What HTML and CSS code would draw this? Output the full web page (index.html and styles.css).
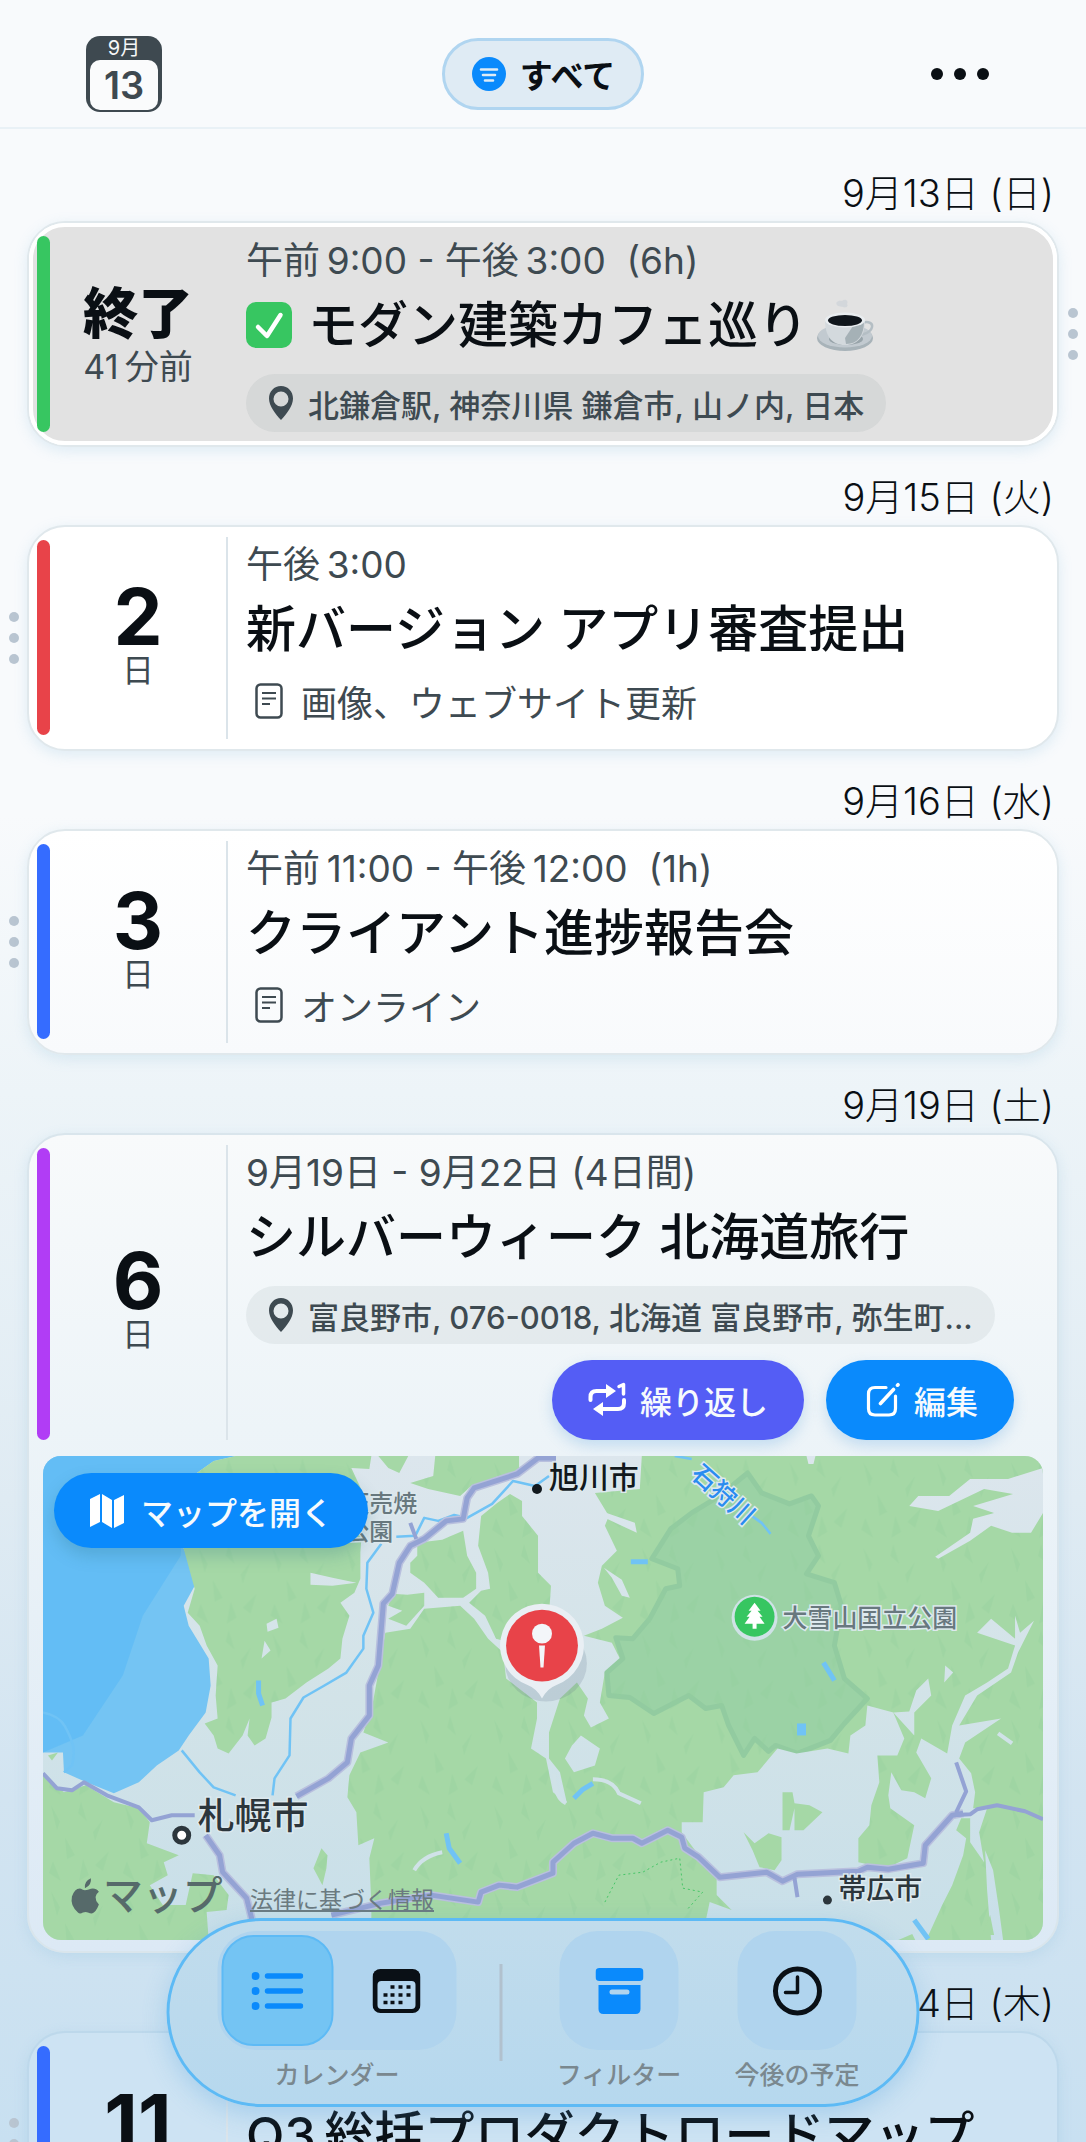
FILE: index.html
```html
<!DOCTYPE html>
<html lang="ja">
<head>
  <meta charset="UTF-8">
  <meta name="viewport" content="width=device-width, initial-scale=1">
  <title>カレンダー</title>
  <link rel="stylesheet" href="styles.css">
</head>
<body>
  <div class="app">
    <header class="topbar">
      <button class="today" type="button">
        <span class="today-month">9月</span>
        <span class="today-day">13</span>
      </button>
      <button class="filter-pill" type="button">
        <svg width="34" height="34" viewBox="0 0 34 34" aria-hidden="true">
          <circle cx="17" cy="17" r="17" fill="#0a8afc"/>
          <path d="M9 12.500h16M11 18h12M13 23.500h8" stroke="#dfecf5" stroke-width="2.600" stroke-linecap="round"/>
        </svg>
        すべて
      </button>
      <button class="more" type="button" aria-label="その他">
        <span></span><span></span><span></span>
      </button>
    </header>

    <main class="agenda">
      <h2 class="date">9月13日 (日)</h2>
      <div class="entry">
        <article class="card done">
          <div class="row">
            <div class="bar green"></div>
            <div class="day">
              <strong class="state">終了</strong>
              <span class="ago">41&thinsp;分前</span>
            </div>
            <div class="info">
              <p class="time">午前&thinsp;9:00 - 午後&thinsp;3:00&nbsp; (6h)</p>
              <h3 class="title">
                <svg class="check" width="46" height="46" viewBox="0 0 46 46" aria-hidden="true">
                  <rect width="46" height="46" rx="10" fill="#37c661"/>
                  <path d="M12 25l9 9L34.500 13" fill="none" stroke="#fff" stroke-width="4.500" stroke-linecap="round" stroke-linejoin="round"/>
                </svg>
                <span>モダン建築カフェ巡り</span>
                <svg width="58" height="54" viewBox="0 0 58 54" aria-hidden="true">
                  <path d="M22 8c-4-3 0-6 4-5 3-3 7 0 5 3 2 3-2 4-4 3" fill="#cfd5d9" opacity=".8"/>
                  <ellipse cx="29" cy="40" rx="28" ry="13" fill="#a8b3b9"/>
                  <ellipse cx="29" cy="38" rx="27" ry="11.500" fill="#c2cad0"/>
                  <ellipse cx="30" cy="41" rx="17" ry="6" fill="#98a4aa"/>
                  <path d="M45 27c4-5 12-3 11 2s-8 8-14 8" fill="none" stroke="#b4bec4" stroke-width="2.500"/>
                  <path d="M9 22c0 15 6 25 20 25s20-10 20-25z" fill="#d3d9dd"/>
                  <path d="M30 46c12 0 18-9 18-23l-11 5-8 12z" fill="#9aa6ac" opacity=".8"/>
                  <ellipse cx="29" cy="22" rx="20" ry="7.500" fill="#e9edf0"/>
                  <ellipse cx="29" cy="22.500" rx="17" ry="5.500" fill="#10161c"/>
                </svg>
              </h3>
              <p class="place">
                <svg width="26" height="36" viewBox="0 0 26 36" aria-hidden="true">
                  <path fill-rule="evenodd" d="M13 1C6 1 1 6.500 1 13.500 1 21 7.500 29 13 35c5.500-6 12-14 12-21.500C25 6.500 20 1 13 1zm0 5.500a7.500 7.500 0 1 1 0 15 7.500 7.500 0 0 1 0-15z" fill="#3e4a51"/>
                </svg>
                <span>北鎌倉駅, 神奈川県 鎌倉市, 山ノ内, 日本</span>
              </p>
            </div>
          </div>
        </article>
        <div class="handle right"><i></i><i></i><i></i></div>
      </div>

      <h2 class="date">9月15日 (火)</h2>
      <div class="entry">
        <div class="handle"><i></i><i></i><i></i></div>
        <article class="card">
          <div class="row">
            <div class="bar red"></div>
            <div class="day">
              <strong class="count">2</strong>
              <span class="unit">日</span>
            </div>
            <div class="rule"></div>
            <div class="info">
              <p class="time">午後&thinsp;3:00</p>
              <h3 class="title">新バージョン アプリ審査提出</h3>
              <p class="memo">
                <svg width="28" height="36" viewBox="0 0 28 36" aria-hidden="true">
                  <rect x="1.500" y="1.500" width="25" height="33" rx="4" fill="none" stroke="#3e4a51" stroke-width="2.500"/>
                  <path d="M7 10h14M7 15.500h14M7 21h8" stroke="#3e4a51" stroke-width="2.200"/>
                </svg>
                <span>画像、ウェブサイト更新</span>
              </p>
            </div>
          </div>
        </article>
      </div>

      <h2 class="date">9月16日 (水)</h2>
      <div class="entry">
        <div class="handle"><i></i><i></i><i></i></div>
        <article class="card fade-1">
          <div class="row">
            <div class="bar blue"></div>
            <div class="day">
              <strong class="count">3</strong>
              <span class="unit">日</span>
            </div>
            <div class="rule"></div>
            <div class="info">
              <p class="time">午前&thinsp;11:00 - 午後&thinsp;12:00&nbsp; (1h)</p>
              <h3 class="title">クライアント進捗報告会</h3>
              <p class="memo">
                <svg width="28" height="36" viewBox="0 0 28 36" aria-hidden="true">
                  <rect x="1.500" y="1.500" width="25" height="33" rx="4" fill="none" stroke="#3e4a51" stroke-width="2.500"/>
                  <path d="M7 10h14M7 15.500h14M7 21h8" stroke="#3e4a51" stroke-width="2.200"/>
                </svg>
                <span>オンライン</span>
              </p>
            </div>
          </div>
        </article>
      </div>

      <h2 class="date">9月19日 (土)</h2>
      <div class="entry">
        <article class="card fade-2">
          <div class="row open">
            <div class="bar purple"></div>
            <div class="day">
              <strong class="count">6</strong>
              <span class="unit">日</span>
            </div>
            <div class="rule"></div>
            <div class="info">
              <p class="time">9月19日 - 9月22日 (4日間)</p>
              <h3 class="title">シルバーウィーク 北海道旅行</h3>
              <p class="place">
                <svg width="26" height="36" viewBox="0 0 26 36" aria-hidden="true">
                  <path fill-rule="evenodd" d="M13 1C6 1 1 6.500 1 13.500 1 21 7.500 29 13 35c5.500-6 12-14 12-21.500C25 6.500 20 1 13 1zm0 5.500a7.500 7.500 0 1 1 0 15 7.500 7.500 0 0 1 0-15z" fill="#3e4a51"/>
                </svg>
                <span>富良野市, 076-0018, 北海道 富良野市, 弥生町...</span>
              </p>
              <div class="actions">
                <button class="action repeat" type="button">
                  <svg width="38" height="36" viewBox="0 0 38 36" aria-hidden="true">
                    <path d="M2.500 18v-3q0-6 6-6H18M36 18v3q0 6-6 6H14" fill="none" stroke="#fff" stroke-width="4" stroke-linecap="round"/>
                    <path d="M18 2l10 7-10 7zM15 20L5 27l10 7z" fill="#fff"/>
                    <path d="M31 4.500L35.500 2.500V12" fill="none" stroke="#fff" stroke-width="3.500" stroke-linecap="round" stroke-linejoin="round"/>
                  </svg>
                  繰り返し
                </button>
                <button class="action edit" type="button">
                  <svg width="34" height="36" viewBox="0 0 34 36" aria-hidden="true">
                    <path d="M20 5.500H9q-6.500 0-6.500 6.500v14.500Q2.500 33 9 33h14q6.500 0 6.500-6.500V14" fill="none" stroke="#fff" stroke-width="3.200" stroke-linecap="round"/>
                    <path d="M27.500 7.500L14.500 21.500M31.500 3.200l.500-.500" stroke="#fff" stroke-width="3.600" stroke-linecap="round"/>
                  </svg>
                  編集
                </button>
              </div>
            </div>
          </div>

          <div class="map">
            <svg class="map-art" viewBox="0 0 1002 485" preserveAspectRatio="xMidYMid slice">
              <defs>
                <pattern id="relief" width="74" height="86" patternUnits="userSpaceOnUse">
                  <path d="M8 6l9 16-3 9zM38 2l6 20-9-8zM60 20l-8 22-2-9zM22 38l10 18-8 4zM66 52l-6 20-8-6zM10 62l8 20-12-8zM40 60l6 16-10 6z" fill="#93cd9c" opacity=".3"/>
                </pattern>
                <linearGradient id="plain" gradientUnits="userSpaceOnUse" x1="0" y1="0" x2="0" y2="485">
                  <stop offset="0" stop-color="#dce6ed"/>
                  <stop offset=".5" stop-color="#d2e3e8"/>
                  <stop offset="1" stop-color="#c8dfe9"/>
                </linearGradient>
                <g id="woods">
                  <path d="M193 0H329L327 13 309 12 322 40 318 97V123L312 137 298 147 307 160 300 183 298 203 286 213 264 227 243 243 229 247V262L223 283 212 290 205 280 207 263 200 280 186 298 175 293 171 280 162 268 175 263 173 240 175 210 164 190 157 170 145 157 152 133 141 93 140 40 154 17 171 5z"/>
                  <path d="M393 0H477V15L457 20 429 30 418 40 386 33 368 27 391 20zM336 0H366L357 17 346 12z"/>
                  <path d="M375 87L400 84 421 75 425 100 434 117V133L421 142H396L382 127 368 117V107L375 100z"/>
                  <path d="M439 60L455 47 468 38 480 45V60L496 80V117L509 130 507 160 480 190 454 183 443 160 427 147 439 135 448 133 446 117 436 90z"/>
                  <path d="M350 138L365 139 382 137V150L364 170 346 163 360 155 346 150z"/>
                  <path d="M343 177L368 173 382 153 418 150 432 163 446 183 461 197 464 223 495 247V263L489 293 504 303 511 337 525 348 518 317 507 303V277L518 243 535 227 546 243 542 260 549 272 567 263 558 247 563 217 579 205 570 187 542 180 560 173 581 162 563 150 556 127 560 110 575 95 563 70 567 60 553 37 598 33 600 0H1002V485H329V450L327 403 332 383 316 390 314 357 305 342 307 320 318 297 346 287 321 277 330 250 336 217z"/>
                  <path d="M0 320L21 337 43 330 71 347 96 353 107 367 104 388 136 400 121 407 125 420 107 430 120 450H143L150 418 171 420 186 440 184 455 164 457 166 485H0zM279 393L285 400 284 413 280 430 271 413z"/>
                </g>
              </defs>

              <rect width="1002" height="485" fill="url(#plain)"/>
              <path d="M0 0H193L171 5 154 17 140 40 141 93 153 117 152 130 141 150 146 170 166 203 168 230 163 257 146 280 136 295 114 310 96 327 71 338 46 328 21 317 20 297H0z" fill="#74c4f3"/>
              <path d="M0 0H193L171 5 154 17 140 60 138 100 100 160 80 220 40 280 0 297z" fill="#5dbbf5" opacity=".7"/>
              <use href="#woods" fill="#a5d8a6"/>
              <path d="M706 17L720 37 748 48 770 40 777 50 767 80 777 100 765 118 793 127 800 150 793 190 803 223 826 243 803 268 789 285 756 298 734 290 727 296 713 283 702 300 687 270 680 250 664 253 647 240 612 258 588 242 567 240 565 217 581 203 574 182 591 183 608 163 624 133 638 130 636 113 610 103 629 73 650 57 678 40z" fill="#9bd2a5" stroke="#92cba0" stroke-width="5" stroke-linejoin="round"/>
              <use href="#woods" fill="url(#relief)"/>

              <!-- plains and valleys -->
              <g fill="url(#plain)">
                <path d="M640 367H661L662 337 682 332 692 320 716 317 736 293 755 298 786 293 807 298 809 280 824 270 826 250 852 257 863 283 856 300H836L838 327 830 350 828 370 817 383V407L845 413 866 403 873 370 849 353 847 340 850 317 860 335 873 337 884 343 890 323 875 297 880 283 906 298 911 270 924 240 946 227 967 213 974 190 936 177 950 163 974 183V160L979 177 993 165 977 197 970 217 936 240 918 270 960 263 924 287 918 303 930 318 934 337 932 353 946 353 938 377 943 407 929 387V363H920L915 375 925 383 922 400 911 430 901 450 885 485H660L668 447 690 455 675 440V420L657 400 640 377z"/>
                <path d="M868 50L877 40 908 40 929 23 967 23 1002 12V57L990 77H971L950 70 929 85 897 103 894 101 929 77 932 63 953 57 932 50 972 38 943 33 897 55z"/>
                <path d="M904 210L912 217 903 227zM887 223L890 240 873 257V280L852 257 868 256 875 235zM523 303L530 290 539 280 558 293 553 310 532 317zM268 117L290 122 314 127 290 130 268 129zM224 168L234 163 236 172 225 176zM222 185L228 195 219 203zM765 0h9l-2 8h-5z"/>
                <path d="M944 395l8 20 6 40 4 30h-12l-4-50zM559 55l34 12 2 10-30-14zM562 112l18 12 8 18-8-2-10-18z"/>
              </g>
              <g fill="#a5d8a6">
                <path d="M741 337H751L753 348 768 350 781 357 762 375H753V353L748 375H741zM702 377L713 388 727 378 740 382V405L733 415 718 412 711 395z"/>
                <path d="M857 485l14-6 3 6zM941 480l8-20 4 20zM5 300l10-3-6 8z"/>
              </g>
              <g fill="none" stroke="#d0e2e8" stroke-width="4">
                <path d="M372 415q8-14 28-18M512 318q0 24 12 30M551 324q20 0 26 14l22 10M957 278l14 10"/>
              </g>
              <path d="M563 447L577 420 601 417 619 407 638 403 641 433 661 437 645 455" fill="none" stroke="#45c566" stroke-dasharray="2 3"/>

              <g fill="none" stroke="#70c3f5" stroke-width="2.500" stroke-linejoin="round">
                <path d="M507 20L493 30 471 25 450 48 425 62 412 59 396 65 382 62 373 80 354 81M339 88L325 107 324 133 331 157 321 180V193L304 217 282 230 261 242 248 263 247 300 232 323 230 340M139 295L157 317 171 332 193 340M0 257Q16 260 22 271T30 290 29 310L21 317M633 0L650 3M706 57L720 67 729 78"/>
                <path d="M216 225V238L220 250M589 106H606" stroke-width="5"/>
                <path d="M404 378L407 393 418 408M782 207L793 225M532 343L541 334 551 328M873 465L887 484" stroke-width="5"/>
                <path d="M760 268V280" stroke-width="9"/>
              </g>

              <g fill="none" stroke-linejoin="round">
                <g stroke="#b9c0de" stroke-width="8">
                  <path d="M514 2H496L475 18 432 32 425 42 421 63 404 65 382 83 368 90 357 107 350 138 341 148 336 210 327 230V260L309 283 305 307 286 323 254 341M163 380L177 400 180 417 204 443 209 463V485"/>
                  <path d="M289 460L339 448 389 440 436 447 439 437 457 430 475 432 511 418V407L532 388 551 378 570 383 591 383 600 388 626 375 640 382 643 393 657 402 678 422 725 417 741 426 756 419 817 416 826 412 847 414 882 408 884 390 911 360 922 358"/>
                </g>
                <g stroke="#94a3d4" stroke-width="5">
                  <path d="M514 2H496L475 18 432 32 425 42 421 63 404 65 382 83 368 90 357 107 350 138 341 148 336 210 327 230V260L309 283 305 307 286 323 254 341M163 380L177 400 180 417 204 443 209 463V485"/>
                  <path d="M289 460L339 448 389 440 436 447 439 437 457 430 475 432 511 418V407L532 388 551 378 570 383 591 383 600 388 626 375 640 382 643 393 657 402 678 422 725 417 741 426 756 419 817 416 826 412 847 414 882 408 884 390 911 360 922 358"/>
                  <path d="M0 318L14 333 29 335 41 327 64 340 96 352 109 365 129 360 152 360M911 360L929 359 936 354 956 350 984 356 1002 364M915 307L925 336 915 357M753 423L756 442M368 67L374 83" stroke-width="4"/>
                </g>
              </g>

              <g class="map-label">
                <text x="303" y="56" font-size="24" fill="#68787e">天売焼</text>
                <text x="303" y="84" font-size="24" fill="#68787e">公園</text>
                <text x="507" y="32" font-size="30" fill="#11181d">旭川市</text>
                <text x="741" y="171" font-size="25" fill="#68787e">大雪山国立公園</text>
                <text x="155" y="374" font-size="37" fill="#2c363c">札幌市</text>
                <text x="797" y="444" font-size="28" fill="#2c363c">帯広市</text>
                <text x="648" y="20" font-size="25" fill="#2a8cf0" transform="rotate(42 648 20)">石狩川</text>
              </g>
              <circle cx="495" cy="33" r="5" fill="#11181d"/>
              <circle cx="786" cy="445" r="4.500" fill="#2c363c"/>
              <circle cx="139" cy="380" r="7" fill="#fff" stroke="#2c363c" stroke-width="5"/>

              <circle cx="713" cy="162" r="23" fill="#cfe2e6"/>
              <circle cx="713" cy="161" r="20" fill="#37c661"/>
              <path d="M713 147l6 8h-3l5 6h-3l5 7h-8v5h-4v-5h-8l5-7h-3l5-6h-3z" fill="#fff"/>

              <ellipse cx="504" cy="208" rx="41" ry="38" fill="#5b6b86" opacity=".18"/>
              <path d="M500 148a42 42 0 0 1 14 81.600q-9 3.400-14 13.400-5-10-14-13.400A42 42 0 0 1 500 148z" fill="#e9eff4"/>
              <circle cx="500" cy="190" r="36" fill="#e84349"/>
              <circle cx="500" cy="178" r="10" fill="#f3f6f9"/>
              <path d="M497 190h6l-1.500 22h-3z" fill="#f3f6f9"/>

              <!-- map provider mark -->
              <path d="M48 423q1 7-6 10-1-7 6-10zM42 435q3 0 6-1.500 5-1 8 3-7 5 0 13-3 8-7 9-2 0-4-1t-5 0q-3 2-5 0-8-7-6-16 3-9 9-8 2 1.500 4 1.500z" fill="#566a6a"/>
              <text class="map-brand" x="60" y="455">マップ</text>
            </svg>
            <button class="map-open" type="button">
              <svg width="34" height="34" viewBox="0 0 34 34" aria-hidden="true">
                <path d="M0 5L10 0v28L0 33zM12 0l10 6v28l-10-6zM24 6l10-5v28l-10 5z" fill="#fff"/>
              </svg>
              マップを開く
            </button>
            <a class="map-legal" href="#legal">法律に基づく情報</a>
          </div>
        </article>
      </div>

      <h2 class="date">9月24日 (木)</h2>
      <div class="entry">
        <div class="handle"><i></i><i></i><i></i></div>
        <article class="card fade-3">
          <div class="row">
            <div class="bar blue"></div>
            <div class="day">
              <strong class="count">11</strong>
              <span class="unit">日</span>
            </div>
            <div class="rule"></div>
            <div class="info">
              <p class="time"></p>
              <h3 class="title">Q3&thinsp;総括プロダクトロードマップ</h3>
              <p class="memo"></p>
            </div>
          </div>
        </article>
      </div>
    </main>

    <nav class="dock">
      <div class="dock-item">
        <div class="switch">
          <button class="selected" type="button" aria-label="リスト">
            <svg width="52" height="38" viewBox="0 0 52 38" aria-hidden="true">
              <g fill="#0a8afc"><circle cx="4" cy="4" r="4"/><circle cx="4" cy="19" r="4"/><circle cx="4" cy="34" r="4"/></g>
              <path d="M16 4h33M16 19h33M16 34h33" stroke="#0a8afc" stroke-width="5.500" stroke-linecap="round"/>
            </svg>
          </button>
          <button type="button" aria-label="月">
            <svg width="48" height="44" viewBox="0 0 48 44" aria-hidden="true">
              <rect width="48" height="44" rx="8" fill="#0a1016"/>
              <rect x="5" y="12" width="38" height="28" rx="4" fill="#b3d5ee"/>
              <path d="M18 18h4m4 0h4m4 0h4M11 26h4m3 0h4m4 0h4m4 0h4M11 33.500h4m3 0h4m4 0h4" stroke="#0a1016" stroke-width="3.600"/>
            </svg>
          </button>
        </div>
        <span>カレンダー</span>
      </div>
      <div class="dock-rule"></div>
      <button class="dock-item" type="button">
        <span class="tile">
          <svg width="48" height="46" viewBox="0 0 48 46" aria-hidden="true">
            <rect width="48" height="13" rx="4" fill="#0a8afc"/>
            <path fill-rule="evenodd" d="M3 17h42v24q0 5-5 5H8q-5 0-5-5zm13.500 4.500a2.500 2.500 0 0 0 0 5h15a2.500 2.500 0 0 0 0-5z" fill="#0a8afc"/>
          </svg>
        </span>
        <span>フィルター</span>
      </button>
      <button class="dock-item" type="button">
        <span class="tile">
          <svg width="50" height="50" viewBox="0 0 50 50" aria-hidden="true">
            <circle cx="25" cy="25" r="22" fill="none" stroke="#0a1016" stroke-width="5"/>
            <path d="M25 11v15.500H13" fill="none" stroke="#0a1016" stroke-width="3.500" stroke-linecap="round" stroke-linejoin="round"/>
          </svg>
        </span>
        <span>今後の予定</span>
      </button>
    </nav>
  </div>
</body>
</html>
```

FILE: styles.css
```css
* {
  box-sizing: border-box;
}

body {
  margin: 0;
  color: #0a0f14;
  font-family: Inter, "Noto Sans CJK JP", sans-serif;
}

h2,
h3,
p {
  margin: 0;
}

button {
  border: 0;
  padding: 0;
  background: none;
  color: inherit;
  font: inherit;
}

svg {
  display: block;
  flex: none;
}

.app {
  position: relative;
  height: 100vh;
  overflow: hidden;
  background: linear-gradient(#f8fafc 38%, #edf4f8 51%, #dfebf3 70%, #d2e4f1 84%, #c8e0f1);
}

/* top bar */
.topbar {
  display: grid;
  grid-template-columns: 1fr auto 1fr;
  align-items: center;
  height: 129px;
  padding: 20px 86px 0;
  border-bottom: 2px solid #e9f1f6;
}

.today {
  display: flex;
  flex-direction: column;
  width: 76px;
  height: 76px;
  padding: 0 4px 4px;
  border-radius: 14px;
  background: #3e4950;
  color: #f5f7f8;
}

.today-month {
  font-size: 20px;
  line-height: 24px;
}

.today-day {
  flex: 1;
  border-radius: 10px;
  background: #fafbfc;
  color: #3e4950;
  font-size: 38px;
  font-weight: 600;
  line-height: 50px;
}

.filter-pill {
  display: flex;
  align-items: center;
  gap: 14px;
  height: 72px;
  padding: 0 26px 0 27px;
  border: 3px solid #b0d5f0;
  border-radius: 36px;
  background: #dfebf4;
  font-size: 33px;
  font-weight: 700;
}

.more {
  display: flex;
  gap: 11px;
  justify-self: end;
  margin-right: 11px;
}

.more span {
  width: 12px;
  height: 12px;
  border-radius: 50%;
  background: #0a0f14;
}

/* agenda */
.agenda {
  padding-top: 14px;
}

.date {
  padding: 26px 32px 4px;
  font-size: 38px;
  font-weight: 300;
  line-height: 48px;
  text-align: right;
}

.entry {
  display: grid;
  grid-template-columns: 27px 1fr 27px;
  align-items: center;
}

.handle {
  display: flex;
  flex-direction: column;
  align-items: center;
  gap: 11px;
  grid-column: 1;
}

.handle.right {
  grid-column: 3;
}

.handle i {
  width: 10px;
  height: 10px;
  border-radius: 50%;
  background: #b9c5d1;
}

.card {
  grid-column: 2;
  min-width: 0;
  border: 2px solid #e0e8ec;
  border-radius: 38px;
  background: #fff;
  box-shadow: 0 4px 14px rgba(120, 180, 215, 0.2);
}

/* cards pick up the blue of the page further down */
.card.fade-1 {
  background: linear-gradient(#fff, #f8fafc);
}

.card.fade-2 {
  border-color: #d9e5ec;
  background: linear-gradient(#f8fafb, #edf4f8 36%, #dce9f5);
}

.card.fade-3 {
  border-color: #bdd8eb;
  background: #cde3f3;
}

.done .row {
  border: 4px solid #fff;
  border-radius: 36px;
  background: #e2e2e2;
}

.done .bar {
  margin: 9px 0 9px 4px;
}

.done .info {
  padding: 12px 18px 9px 20px;
}

.row {
  display: flex;
}

.bar {
  flex: none;
  width: 13px;
  margin: 13px 0 14px 8px;
  border-radius: 7px;
}

.green {
  background: #37c661;
}

.red {
  background: #e84349;
}

.blue {
  background: #356cff;
}

.purple {
  background: #b13df5;
}

.day {
  display: flex;
  flex-direction: column;
  flex: none;
  align-items: center;
  justify-content: center;
  width: 176px;
}

.state {
  font-size: 55px;
  font-weight: 900;
  line-height: 66px;
}

.count {
  font-size: 78px;
  font-weight: 700;
  line-height: 66px;
}

.unit,
.ago {
  color: #3e4a51;
  font-size: 32px;
  line-height: 42px;
}

.ago {
  font-size: 34px;
}

.rule {
  flex: none;
  width: 2px;
  margin: 10px 0;
  background: #dbe4ea;
}

.info {
  flex: 1;
  min-width: 0;
  padding: 16px 18px 13px;
}

.time {
  height: 44px;
  color: #3e4a51;
  font-size: 37px;
  line-height: 44px;
}

.title {
  display: flex;
  align-items: center;
  gap: 8px;
  margin: 10px 0 17px;
  font-size: 50px;
  font-weight: 500;
  line-height: 64px;
  white-space: nowrap;
}

.check {
  margin-right: 8px;
}

.place {
  display: flex;
  align-items: center;
  gap: 14px;
  width: fit-content;
  height: 58px;
  padding: 0 22px;
  border-radius: 29px;
  background: rgba(60, 90, 90, 0.07);
  color: #3e4a51;
  font-size: 31px;
  font-weight: 500;
  white-space: nowrap;
}

.memo {
  display: flex;
  align-items: center;
  gap: 18px;
  height: 46px;
  margin-bottom: 12px;
  padding-left: 9px;
  color: #3e4a51;
  font-size: 36px;
}

.open .bar,
.open .rule {
  margin-bottom: 0;
}

.open .day {
  padding-top: 28px;
}

.open .info {
  padding-bottom: 0;
}

.actions {
  display: flex;
  justify-content: flex-end;
  gap: 22px;
  margin-top: 16px;
  padding-right: 25px;
}

.action {
  display: flex;
  align-items: center;
  gap: 14px;
  height: 80px;
  padding: 0 36px;
  border-radius: 40px;
  color: #f6fafd;
  font-size: 32px;
  font-weight: 500;
  box-shadow: 0 6px 14px rgba(70, 150, 220, 0.25);
}

.repeat {
  background: #545df5;
}

.edit {
  padding: 0 36px 0 40px;
  background: #0a8afc;
}

/* map */
.map {
  position: relative;
  margin: 16px 14px 11px;
  border-radius: 18px;
  overflow: hidden;
}

.map-art {
  width: 100%;
}

.map-label {
  font-weight: 500;
  stroke: #dde9ee;
  stroke-width: 3px;
  paint-order: stroke;
}

.map-brand {
  fill: #566a6a;
  font-size: 40px;
  font-weight: 500;
}

.map-open {
  position: absolute;
  top: 17px;
  left: 11px;
  display: flex;
  align-items: center;
  gap: 17px;
  height: 75px;
  padding: 0 35px 0 36px;
  border-radius: 38px;
  background: #0a8afc;
  color: #f6fafd;
  font-size: 32px;
  font-weight: 500;
  box-shadow: 0 8px 16px rgba(40, 110, 130, 0.25);
}

.map-legal {
  position: absolute;
  bottom: 24px;
  left: 207px;
  color: #6b7a80;
  font-size: 23px;
  line-height: 32px;
}

/* dock */
.dock {
  position: absolute;
  bottom: 35px;
  left: 50%;
  display: flex;
  align-items: flex-start;
  height: 189px;
  padding: 10px 57px 0 48px;
  border: 3px solid #5dbaf5;
  border-radius: 95px;
  background: linear-gradient(#c1dcec, #b6d8ee);
  box-shadow: 0 8px 24px rgba(80, 160, 220, 0.3);
  white-space: nowrap;
  transform: translateX(-50%);
}

.dock-item {
  display: flex;
  flex-direction: column;
  align-items: center;
  gap: 8px;
  min-width: 125px;
  color: #7a888f;
  font-size: 25px;
  font-weight: 500;
  line-height: 34px;
}

.dock-item + .dock-item {
  margin-left: 53px;
}

.switch {
  display: flex;
  gap: 7px;
  height: 119px;
  padding: 4px;
  border-radius: 38px;
  background: #b0d4ee;
}

.switch button {
  display: flex;
  align-items: center;
  justify-content: center;
  width: 112px;
  height: 111px;
  border-radius: 32px;
}

.switch .selected {
  border: 2px solid #5dbaf5;
  background: #74c4f3;
}

.dock-rule {
  width: 3px;
  height: 97px;
  margin: 33px 54px 0 43px;
  background: #b1c1ce;
}

.tile {
  display: flex;
  align-items: center;
  justify-content: center;
  width: 119px;
  height: 119px;
  border-radius: 38px;
  background: #b0d4ee;
}
```
